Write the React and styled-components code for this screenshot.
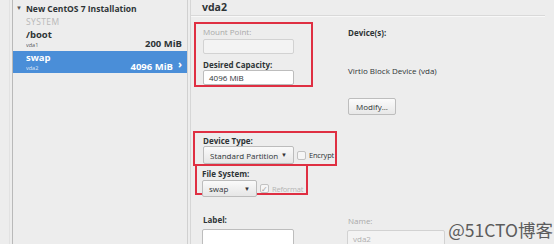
import React from 'react';
import styled, { createGlobalStyle } from 'styled-components';

const GlobalStyle = createGlobalStyle`
  html, body {
    margin: 0;
    padding: 0;
    background: #ededed;
    font-family: 'Open Sans', 'Noto Sans', sans-serif;
    color: #2e3436;
    overflow: hidden;
  }
`;

const Screen = styled.div`
  position: relative;
  display: flex;
  width: 554px;
  height: 244px;
  overflow: hidden;
  background: #ededed;
`;

const Gutter = styled.div`
  width: 9px;
  flex: none;
  border-right: 1px solid #e2e2e2;
  margin-right: 2px;
`;

const Sidebar = styled.div`
  width: 174px;
  flex: none;
  border-left: 1px solid #b9b9b9;
  border-right: 1px solid #d0d0d0;
  box-shadow: 2px 0 0 #ededed, 3px 0 0 #d6d6d6;
  display: flex;
  flex-direction: column;
`;

const TreeHeader = styled.div`
  height: 16px;
  display: flex;
  align-items: center;
  padding-left: 3px;
  font-size: 8.5px;
  font-weight: 700;
  gap: 4px;
`;

const Caret = styled.span`
  font-size: 6px;
  color: #555;
`;

const Section = styled.div`
  padding-left: 13px;
  height: 12px;
  font-size: 8.5px;
  color: #b8b8b8;
  letter-spacing: 0.4px;
  line-height: 12px;
`;

const MountRow = styled.div`
  height: 22px;
  display: flex;
  align-items: center;
  padding: 0 5px 0 13px;
  background: ${(p) => (p.$selected ? '#4a8ed8' : 'transparent')};
  color: ${(p) => (p.$selected ? '#fff' : '#2e3436')};
  margin-top: ${(p) => (p.$selected ? '1px' : '0')};
`;

const MountNames = styled.div`
  flex: 1;
  display: flex;
  flex-direction: column;
  line-height: 1;
`;

const MountName = styled.span`
  font-size: 9.5px;
  font-weight: 700;
`;

const MountDev = styled.span`
  font-size: 5.5px;
  margin-top: 3px;
  opacity: 0.8;
`;

const MountSize = styled.span`
  font-size: 9.5px;
  font-weight: 700;
  margin-top: 8px;
`;

const Chevron = styled.span`
  font-size: 11px;
  font-weight: 700;
  margin-left: 5px;
  margin-top: 2px;
`;

const Main = styled.div`
  flex: 1;
  margin-left: 3px;
  display: flex;
  flex-direction: column;
`;

const MainHeader = styled.div`
  height: 15px;
  padding-left: 11px;
  font-size: 10.5px;
  font-weight: 700;
  line-height: 15px;
  border-bottom: 1px solid #d9d9d9;
  box-shadow: 0 1px 0 #f8f8f8;
  margin-right: 9px;
`;

const Body = styled.div`
  display: grid;
  grid-template-columns: 155px 1fr;
  padding-left: 2px;
`;

const Column = styled.div`
  display: flex;
  flex-direction: column;
  align-items: flex-start;
`;

const Marked = styled.div`
  border: 2px solid #df2f42;
  box-sizing: border-box;
  width: ${(p) => p.$w}px;
  height: ${(p) => p.$h}px;
  margin-top: ${(p) => p.$top || 0}px;
  margin-left: ${(p) => p.$left || 0}px;
  padding: ${(p) => p.$pad || '2px 0 0 7px'};
  display: flex;
  flex-direction: column;
  align-items: flex-start;
`;

const Label = styled.div`
  font-size: 8px;
  font-weight: ${(p) => (p.$muted ? 400 : 700)};
  color: ${(p) => (p.$muted ? '#a9a9a9' : '#2e3436')};
  line-height: 9px;
  height: 9px;
  margin-top: ${(p) => p.$top || 0}px;
  margin-left: ${(p) => p.$left || 0}px;
`;

const Field = styled.div`
  box-sizing: border-box;
  width: ${(p) => p.$w}px;
  height: ${(p) => p.$h || 17}px;
  margin-top: ${(p) => p.$top || 0}px;
  margin-left: ${(p) => p.$left || 0}px;
  border: 1px solid ${(p) => (p.$disabled ? '#d2d2d2' : '#bdbdbd')};
  border-radius: 2px;
  background: ${(p) => (p.$disabled ? '#f3f3f3' : '#fff')};
  color: ${(p) => (p.$disabled ? '#b0b0b0' : '#2e3436')};
  font-size: 8px;
  padding-left: 5px;
  display: flex;
  align-items: center;
`;

const Row = styled.div`
  display: flex;
  align-items: center;
  margin-top: ${(p) => p.$top || 0}px;
`;

const Select = styled.div`
  box-sizing: border-box;
  width: ${(p) => p.$w}px;
  height: ${(p) => p.$h}px;
  border: 1px solid #bcbcbc;
  border-radius: 2px;
  background: linear-gradient(#fafafa, #e6e6e6);
  font-size: 8px;
  padding: 0 6px;
  display: flex;
  align-items: center;
  justify-content: space-between;
`;

const Arrow = styled.span`
  font-size: 6px;
  color: #333;
`;

const Check = styled.span`
  box-sizing: border-box;
  flex: none;
  width: 9px;
  height: 9px;
  margin-left: 3px;
  border: 1px solid #c2c2c2;
  border-radius: 2px;
  background: #f6f6f6;
  display: flex;
  align-items: center;
  justify-content: center;
  font-size: 8px;
  color: #a5a5a5;
  line-height: 1;
`;

const CheckText = styled.span`
  margin-left: 3px;
  font-size: 7.5px;
  letter-spacing: -0.2px;
  white-space: nowrap;
  color: ${(p) => (p.$muted ? '#b5b5b5' : '#2e3436')};
`;

const Text = styled.div`
  font-size: 8px;
  margin-top: ${(p) => p.$top || 0}px;
  line-height: 9px;
`;

const Button = styled.div`
  box-sizing: border-box;
  width: 48px;
  height: 17px;
  margin-top: ${(p) => p.$top || 0}px;
  border: 1px solid #bdbdbd;
  border-radius: 2px;
  background: linear-gradient(#fbfbfb, #e8e8e8);
  font-size: 8px;
  display: flex;
  align-items: center;
  justify-content: center;
`;

const Watermark = styled.div`
  position: absolute;
  right: 1px;
  bottom: 6px;
  font-family: 'Noto Sans CJK SC', sans-serif;
  font-size: 17.5px;
  color: #5c5c5c;
  line-height: 1;
`;

const App = () => {
  return (
    <>
      <GlobalStyle />
      <Screen>
        <Gutter />
        <Sidebar>
          <TreeHeader>
            <Caret>▼</Caret>New CentOS 7 Installation
          </TreeHeader>
          <Section>SYSTEM</Section>
          <MountRow>
            <MountNames>
              <MountName>/boot</MountName>
              <MountDev>vda1</MountDev>
            </MountNames>
            <MountSize>200 MiB</MountSize>
          </MountRow>
          <MountRow $selected>
            <MountNames>
              <MountName>swap</MountName>
              <MountDev>vda2</MountDev>
            </MountNames>
            <MountSize>4096 MiB</MountSize>
            <Chevron>›</Chevron>
          </MountRow>
        </Sidebar>
        <Main>
          <MainHeader>vda2</MainHeader>
          <Body>
            <Column>
              <Marked $w={119} $h={65} $top={6} $left={1}>
                <Label $muted $top={1}>Mount Point:</Label>
                <Field $w={91} $h={16} $top={3} $disabled />
                <Label $top={6}>Desired Capacity:</Label>
                <Field $w={91} $h={17} $top={1}>4096 MiB</Field>
              </Marked>
              <Marked $w={144} $h={35} $top={44} $pad="2px 0 0 8px">
                <Label $top={1}>Device Type:</Label>
                <Row $top={1}>
                  <Select $w={91} $h={18}>
                    Standard Partition <Arrow>▼</Arrow>
                  </Select>
                  <Check />
                  <CheckText>Encrypt</CheckText>
                </Row>
              </Marked>
              <Marked $w={113} $h={31} $top={-2} $left={2} $pad="2px 0 0 5px">
                <Label $top={1}>File System:</Label>
                <Row $top={2}>
                  <Select $w={55} $h={17}>
                    swap <Arrow>▼</Arrow>
                  </Select>
                  <Check>✓</Check>
                  <CheckText $muted>Reformat</CheckText>
                </Row>
              </Marked>
              <Label $top={20} $left={10}>Label:</Label>
              <Field $w={92} $h={18} $top={5} $left={9} />
            </Column>
            <Column>
              <Label $top={12}>Device(s):</Label>
              <Text $top={29}>Virtio Block Device (vda)</Text>
              <Button $top={23}>Modify...</Button>
              <Label $muted $top={101}>Name:</Label>
              <Field $w={98} $h={17} $top={5} $left={-1} $disabled>vda2</Field>
            </Column>
          </Body>
        </Main>
        <Watermark>@51CTO博客</Watermark>
      </Screen>
    </>
  );
};

export default App;
